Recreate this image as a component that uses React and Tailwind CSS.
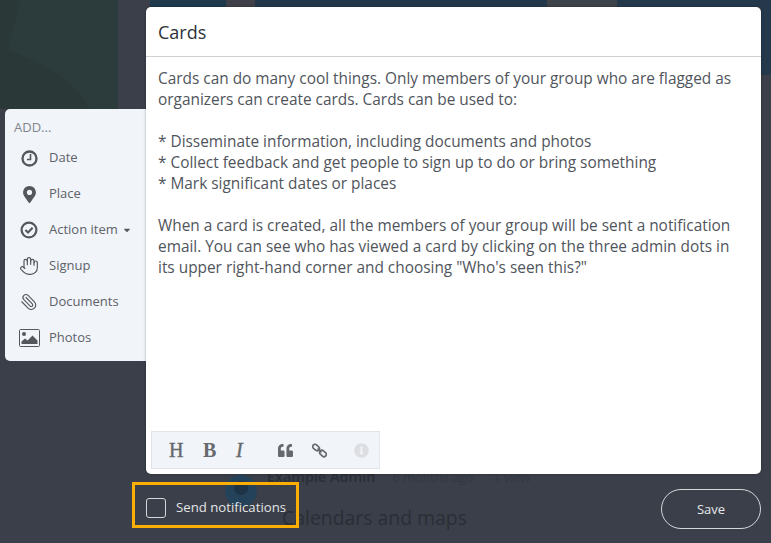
import React from 'react';
import { FaMapMarkerAlt, FaQuoteLeft, FaInfoCircle, FaCaretDown } from 'react-icons/fa';
import { Hand, Paperclip } from 'lucide-react';

const ClockIcon = () => (
    <svg width="17" height="17" viewBox="0 0 17 17" fill="none" stroke="currentColor">
        <circle cx="8.5" cy="8.5" r="7" strokeWidth="2.3" />
        <path d="M9.5 4v5.5H6" strokeWidth="1.6" />
    </svg>
);

const CheckIcon = () => (
    <svg width="18" height="18" viewBox="0 0 18 18" fill="none" stroke="currentColor">
        <circle cx="9" cy="9" r="7.4" strokeWidth="2.2" />
        <path d="M5.4 9l2.6 2.6 4.6-4.8" strokeWidth="2.1" />
    </svg>
);

const PhotoIcon = () => (
    <svg width="21" height="18" viewBox="0 0 21 18">
        <rect x="0.5" y="0.5" width="20" height="17" rx="1" fill="none" stroke="currentColor" />
        <circle cx="5" cy="5" r="2" fill="currentColor" />
        <path d="M2.5 15v-2.5l3.5-3 2.5 2 5-5 5 5V15z" fill="currentColor" />
    </svg>
);

const ChainIcon = () => (
    <svg width="15" height="15" viewBox="0 0 15 15" fill="none" stroke="currentColor" strokeWidth="1.7">
        <rect x="0.4" y="2.2" width="7.4" height="4.6" rx="2.3" transform="rotate(42 4 4.5)" />
        <rect x="7.2" y="8.2" width="7.4" height="4.6" rx="2.3" transform="rotate(42 11 10.5)" />
        <path d="M5.5 5.5l4 4" />
    </svg>
);

const ADD_ITEMS = [
    { label: 'Date', icon: <ClockIcon /> },
    { label: 'Place', icon: <FaMapMarkerAlt size={17} /> },
    { label: 'Action item', icon: <CheckIcon />, caret: true },
    { label: 'Signup', icon: <Hand size={20} strokeWidth={1.4} className="-ml-[1px]" /> },
    { label: 'Documents', icon: <Paperclip size={18} strokeWidth={1.5} className="-scale-x-100" /> },
    { label: 'Photos', icon: <PhotoIcon /> },
];

const AddMenu = () => (
    <div className="w-[141px] h-[252px] mt-[102px] shrink-0 bg-[#f1f4f9] rounded-l-[5px] pt-[11px] pl-[9px] text-[#5d6268]">
        <div className="text-[13px] leading-[14px] text-[#80858b] mb-[6px]">ADD...</div>
        {ADD_ITEMS.map((item) => (
            <div key={item.label} className="flex items-center h-[36px] text-[13px] font-medium">
                <span className="w-[35px] flex justify-center text-[#54585d] pr-[5px]">{item.icon}</span>
                <span>{item.label}</span>
                {item.caret && <FaCaretDown size={10} className="ml-[4px] text-[#54585d]" />}
            </div>
        ))}
    </div>
);

const Toolbar = () => (
    <div className="w-[229px] h-[38px] ml-[5px] mb-[5px] flex items-center bg-[#f1f4f9] border border-[#e1e4e9] text-[#66696d]">
        <span className="ml-[17px] w-[34px] text-[20px] font-['Liberation_Serif',serif] [-webkit-text-stroke:0.4px]">H</span>
        <span className="w-[33px] text-[20px] font-bold font-['Liberation_Serif',serif]">B</span>
        <span className="w-[42px] text-[20px] italic font-['Liberation_Serif',serif] [-webkit-text-stroke:0.4px]">I</span>
        <FaQuoteLeft size={15} className="mr-[19px]" />
        <ChainIcon />
        <FaInfoCircle size={15} className="ml-[27px] text-[#dcdee1]" />
    </div>
);

const Modal = () => (
    <div className="relative w-[615px] h-[467px] bg-white rounded-[5px] flex flex-col shadow-[0_0_3px_rgba(0,0,0,0.3)]">
        <div className="h-[50px] shrink-0 flex items-center pt-[2px] px-[12px] border-b border-[#cfd1d4] text-[18px] font-medium text-[#2c3138]">
            Cards
        </div>
        <div className="flex-1 px-[12px] pt-[11px] text-[15.4px] leading-[21px] text-[#50555c]">
            <p>Cards can do many cool things. Only members of your group who are flagged as organizers can create cards. Cards can be used to:</p>
            <br />
            <p>* Disseminate information, including documents and photos</p>
            <p>* Collect feedback and get people to sign up to do or bring something</p>
            <p>* Mark significant dates or places</p>
            <br />
            <p>When a card is created, all the members of your group will be sent a notification email. You can see who has viewed a card by clicking on the three admin dots in its upper right-hand corner and choosing "Who's seen this?"</p>
        </div>
        <Toolbar />
    </div>
);

export default function App() {
    return (
        <div className="relative w-[771px] h-[543px] overflow-hidden bg-[#3a3f49] font-['Open_Sans',sans-serif]">
            {/* dimmed page behind the dialog */}
            <svg className="absolute left-0 top-0" width="118" height="109" viewBox="0 0 118 109">
                <rect width="118" height="109" fill="#2c3b3b" />
                <path d="M0 0h20C15 25 10 40 8 50c30 12 60 22 82 59H0z" fill="#2a3938" />
            </svg>
            <div className="absolute left-[150px] top-0 w-[76px] h-[7px] bg-[#1e3a4c]" />
            <div className="absolute left-[226px] top-0 w-[29px] h-[7px] bg-[#3f4048]" />
            <div className="absolute left-[255px] top-0 w-[292px] h-[7px] bg-[#24384c]" />
            <div className="absolute left-[547px] top-0 w-[70px] h-[7px] bg-[#3e4249]" />
            <div className="absolute left-[617px] top-0 w-[154px] h-[7px] bg-[#26394c]" />
            <div className="absolute left-[761px] top-0 w-[10px] h-[75px] bg-[#26394c]" />
            <div className="absolute left-[225px] top-[475px] w-[32px] h-[32px] rounded-full bg-[#24425a] overflow-hidden">
                <div className="w-[14px] h-[14px] mx-auto mt-[6px] rounded-full bg-[#1e3344]" />
            </div>
            <div className="absolute left-[267px] top-[466px] flex items-baseline text-[14.4px] text-[#2a2e36]">
                <span className="font-semibold">Example Admin</span>
                <span className="ml-[17px] text-[12.7px] text-[#333842]">6 months ago</span>
                <span className="ml-[20px] text-[12.7px] text-[#333842]">1 view</span>
            </div>
            <div className="absolute left-[282px] top-[503px] text-[19.4px] text-[#2a2e36]">Calendars and maps</div>

            <div className="relative flex flex-col h-full pt-[7px] pl-[5px] pr-[10px]">
                <div className="flex">
                    <AddMenu />
                    <Modal />
                </div>
                <div className="flex items-start justify-between pl-[127px]">
                    <label className="mt-[8px] w-[167px] h-[46px] flex items-center pl-[11px] pt-[6px] border-[3px] border-[#fcaf02] text-[13.2px] text-[#e4e5e7]">
                        <span className="w-[20px] h-[20px] mr-[10px] rounded-[3px] border border-[#d5d7da]" />
                        Send notifications
                    </label>
                    <button className="mt-[15px] w-[100px] h-[40px] pt-[2px] rounded-full border border-[#d5d7da] text-[13px] text-[#e8e9eb]">Save</button>
                </div>
            </div>
        </div>
    );
}
